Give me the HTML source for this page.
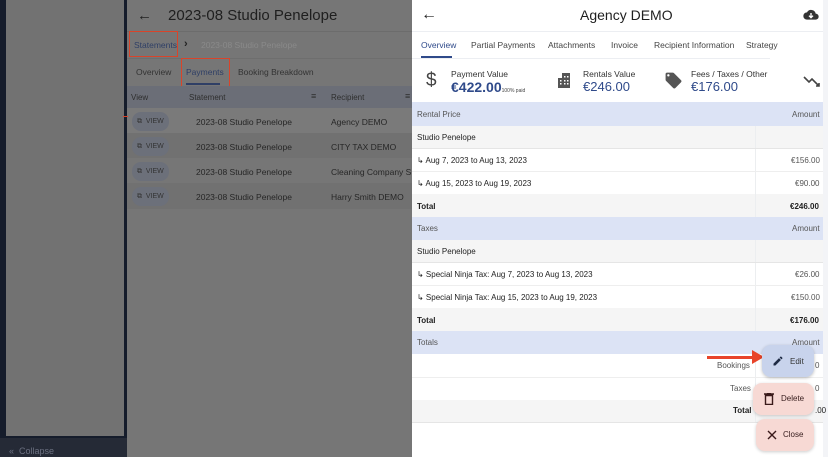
<!DOCTYPE html>
<html><head><style>
*{box-sizing:border-box;margin:0;padding:0}
body{width:828px;height:457px;overflow:hidden;font-family:"Liberation Sans",sans-serif;background:#fff;position:relative}
.abs{position:absolute}
.t{position:absolute;white-space:nowrap}
</style></head><body>
<!-- sidebar -->
<div class="abs" style="left:0;top:0;width:127px;height:457px;background:#151c2b"></div>
<div class="abs" style="left:6px;top:0;width:118px;height:436px;background:#727272"></div>
<div class="abs" style="left:0;top:438px;width:127px;height:19px;background:#252a36"></div>
<div class="t" style="left:9px;top:446px;font-size:9px;color:#6b7080">«&nbsp; Collapse</div>
<!-- middle dimmed panel -->
<div class="abs" style="left:127px;top:0;width:285px;height:457px;background:#767676"></div>
<div class="abs" style="left:127px;top:31px;width:285px;height:1px;background:#6c6c6c"></div>
<div class="abs" style="left:127px;top:58px;width:285px;height:1px;background:#6e6e6e"></div>
<div class="t" style="left:137px;top:7px;font-size:15px;color:#222">←</div>
<div class="t" style="left:168px;top:7px;font-size:15px;color:#1f1f1f">2023-08 Studio Penelope</div>
<div class="abs" style="left:129px;top:31px;width:49px;height:26px;border:1px solid #d9442a"></div>
<div class="t" style="left:134px;top:40px;font-size:8.5px;color:#2f3f66">Statements</div>
<div class="t" style="left:184px;top:38px;font-size:11px;color:#222;font-weight:bold">›</div>
<div class="t" style="left:201px;top:40px;font-size:8.5px;color:#8a8a8a">2023-08 Studio Penelope</div>
<div class="abs" style="left:181px;top:58px;width:49px;height:29px;border:1px solid #d9442a"></div>
<div class="t" style="left:136px;top:67px;font-size:8.5px;color:#333">Overview</div>
<div class="t" style="left:186px;top:67px;font-size:8.5px;color:#2f3f66">Payments</div>
<div class="abs" style="left:186px;top:83px;width:34px;height:2px;background:#2f3f66"></div>
<div class="t" style="left:238px;top:67px;font-size:8.5px;color:#333">Booking Breakdown</div>
<div class="abs" style="left:127px;top:86px;width:285px;height:22px;background:#6b6e77"></div>
<div class="t" style="left:131px;top:93px;font-size:8px;color:#2e2e2e">View</div>
<div class="t" style="left:189px;top:93px;font-size:8px;color:#2e2e2e">Statement</div>
<div class="t" style="left:311px;top:91px;font-size:9px;color:#2e2e2e">≡</div>
<div class="t" style="left:331px;top:93px;font-size:8px;color:#2e2e2e">Recipient</div>
<div class="t" style="left:405px;top:91px;font-size:9px;color:#2e2e2e">≡</div>
<div class="abs" style="left:127px;top:108px;width:285px;height:25px;background:#7a7a7a"></div>
<div class="abs" style="left:127px;top:133px;width:285px;height:25px;background:#717171"></div>
<div class="abs" style="left:127px;top:158px;width:285px;height:25px;background:#767676"></div>
<div class="abs" style="left:127px;top:183px;width:285px;height:26px;background:#717171"></div>
<div class="abs" style="left:123px;top:116px;width:5px;height:1px;background:#d9442a"></div>
<div class="abs" style="left:132px;top:112px;width:37px;height:19px;border-radius:9px;background:#6c707a"></div>
<div class="abs" style="left:132px;top:137px;width:37px;height:19px;border-radius:9px;background:#6c707a"></div>
<div class="abs" style="left:132px;top:162px;width:37px;height:19px;border-radius:9px;background:#6c707a"></div>
<div class="abs" style="left:132px;top:187px;width:37px;height:19px;border-radius:9px;background:#6c707a"></div>
<div class="t" style="left:137px;top:118px;font-size:7px;color:#333">⧉&nbsp; VIEW</div>
<div class="t" style="left:137px;top:143px;font-size:7px;color:#333">⧉&nbsp; VIEW</div>
<div class="t" style="left:137px;top:168px;font-size:7px;color:#333">⧉&nbsp; VIEW</div>
<div class="t" style="left:137px;top:193px;font-size:7px;color:#333">⧉&nbsp; VIEW</div>
<div class="t" style="left:196px;top:117px;font-size:8.5px;color:#262626">2023-08 Studio Penelope</div>
<div class="t" style="left:196px;top:142px;font-size:8.5px;color:#262626">2023-08 Studio Penelope</div>
<div class="t" style="left:196px;top:167px;font-size:8.5px;color:#262626">2023-08 Studio Penelope</div>
<div class="t" style="left:196px;top:192px;font-size:8.5px;color:#262626">2023-08 Studio Penelope</div>
<div class="t" style="left:331px;top:117px;font-size:8.5px;color:#262626">Agency DEMO</div>
<div class="t" style="left:331px;top:142px;font-size:8.5px;color:#262626">CITY TAX DEMO</div>
<div class="t" style="left:331px;top:167px;font-size:8.5px;color:#262626">Cleaning Company S.L</div>
<div class="t" style="left:331px;top:192px;font-size:8.5px;color:#262626">Harry Smith DEMO</div>
<!-- right panel -->
<div class="abs" style="left:412px;top:0;width:416px;height:457px;background:#fff"></div>
<div class="abs" style="left:823px;top:0;width:5px;height:457px;background:#f3f4f7"></div>
<div class="t" style="left:421px;top:6px;font-size:16px;color:#222">←</div>
<div class="t" style="left:580px;top:7px;font-size:14px;color:#1f1f1f">Agency DEMO</div>
<svg class="abs" style="left:803px;top:9px" width="16" height="12" viewBox="0 0 24 18"><path d="M19 7a7 7 0 0 0-13-2A5.5 5.5 0 0 0 6 16h13a4.5 4.5 0 0 0 0-9z" fill="#333"/><path d="M12 6v7M9 10l3 3 3-3" stroke="#fff" stroke-width="2" fill="none"/></svg>
<div class="abs" style="left:412px;top:31px;width:411px;height:1px;background:#eceef2"></div>
<div class="t" style="left:421px;top:40px;font-size:8.5px;color:#2f4a8a">Overview</div>
<div class="abs" style="left:421px;top:56px;width:31px;height:2px;background:#2f4a8a"></div>
<div class="t" style="left:471px;top:40px;font-size:8.5px;color:#444">Partial Payments</div>
<div class="t" style="left:548px;top:40px;font-size:8.5px;color:#444">Attachments</div>
<div class="t" style="left:611px;top:40px;font-size:8.5px;color:#444">Invoice</div>
<div class="t" style="left:654px;top:40px;font-size:8.5px;color:#444">Recipient Information</div>
<div class="t" style="left:746px;top:40px;font-size:8.5px;color:#444">Strategy</div>
<div class="abs" style="left:412px;top:58px;width:358px;height:1px;background:#eceef2"></div>
<div class="t" style="left:426px;top:70px;font-size:19px;color:#444">$</div>
<div class="t" style="left:451px;top:69px;font-size:8.5px;color:#333">Payment Value</div>
<div class="t" style="left:451px;top:79px;font-size:14px;color:#2f4a8a;font-weight:bold">€422.00<span style="font-size:5px;color:#444;font-weight:normal">100% paid</span></div>
<svg class="abs" style="left:557px;top:72px" width="16" height="16" viewBox="0 0 16 16"><path d="M1 16V6h4V1h8v15z" fill="#555"/><g fill="#fff"><rect x="3" y="8" width="1.5" height="1.5"/><rect x="3" y="11" width="1.5" height="1.5"/><rect x="7" y="4" width="1.5" height="1.5"/><rect x="10" y="4" width="1.5" height="1.5"/><rect x="7" y="8" width="1.5" height="1.5"/><rect x="10" y="8" width="1.5" height="1.5"/><rect x="7" y="11" width="1.5" height="1.5"/><rect x="10" y="11" width="1.5" height="1.5"/></g></svg>
<div class="t" style="left:583px;top:69px;font-size:8.5px;color:#333">Rentals Value</div>
<div class="t" style="left:583px;top:79px;font-size:13px;color:#2f4a8a">€246.00</div>
<svg class="abs" style="left:664px;top:71px" width="19" height="19" viewBox="0 0 24 24"><path d="M21.4 11.6l-9-9A2 2 0 0 0 11 2H4a2 2 0 0 0-2 2v7c0 .6.2 1.1.6 1.4l9 9a2 2 0 0 0 2.8 0l7-7a2 2 0 0 0 0-2.8zM5.5 7A1.5 1.5 0 1 1 7 5.5 1.5 1.5 0 0 1 5.5 7z" fill="#555"/></svg>
<div class="t" style="left:691px;top:69px;font-size:8.5px;color:#333">Fees / Taxes / Other</div>
<div class="t" style="left:691px;top:79px;font-size:13px;color:#2f4a8a">€176.00</div>
<svg class="abs" style="left:803px;top:75px" width="18" height="12" viewBox="0 0 18 12"><path d="M1 2l5 5 3-3 7 7M13 11h3V8" stroke="#444" stroke-width="1.6" fill="none"/></svg>
<!-- table -->
<div class="abs" style="left:755px;top:126px;width:1px;height:296px;background:#eceef0"></div>
<div class="abs" style="left:412px;top:102px;width:411px;height:24px;background:#dce3f5"></div>
<div class="t" style="left:417px;top:110px;font-size:8px;color:#555">Rental Price</div>
<div class="t" style="left:792px;top:110px;font-size:8px;color:#555">Amount</div>
<div class="abs" style="left:412px;top:126px;width:343px;height:22px;background:#f5f5f5"></div>
<div class="abs" style="left:756px;top:126px;width:67px;height:22px;background:#f5f5f5"></div>
<div class="t" style="left:417px;top:133px;font-size:8px;color:#222">Studio Penelope</div>
<div class="abs" style="left:412px;top:148px;width:411px;height:1px;background:#e5e5e5"></div>
<div class="t" style="left:417px;top:156px;font-size:8px;color:#222">↳ Aug 7, 2023 to Aug 13, 2023</div>
<div class="t" style="left:791px;top:156px;font-size:8px;color:#555">€156.00</div>
<div class="abs" style="left:412px;top:171px;width:411px;height:1px;background:#eee"></div>
<div class="t" style="left:417px;top:179px;font-size:8px;color:#222">↳ Aug 15, 2023 to Aug 19, 2023</div>
<div class="t" style="left:795px;top:179px;font-size:8px;color:#555">€90.00</div>
<div class="abs" style="left:412px;top:194px;width:343px;height:23px;background:#f5f5f5"></div>
<div class="abs" style="left:756px;top:194px;width:67px;height:23px;background:#f5f5f5"></div>
<div class="t" style="left:417px;top:202px;font-size:8px;color:#222;font-weight:bold">Total</div>
<div class="t" style="left:790px;top:202px;font-size:8px;color:#222;font-weight:bold">€246.00</div>
<div class="abs" style="left:412px;top:217px;width:411px;height:23px;background:#dce3f5"></div>
<div class="t" style="left:417px;top:224px;font-size:8px;color:#555">Taxes</div>
<div class="t" style="left:792px;top:224px;font-size:8px;color:#555">Amount</div>
<div class="abs" style="left:412px;top:240px;width:343px;height:22px;background:#f5f5f5"></div>
<div class="abs" style="left:756px;top:240px;width:67px;height:22px;background:#f5f5f5"></div>
<div class="t" style="left:417px;top:247px;font-size:8px;color:#222">Studio Penelope</div>
<div class="abs" style="left:412px;top:262px;width:411px;height:1px;background:#e5e5e5"></div>
<div class="t" style="left:417px;top:270px;font-size:8px;color:#222">↳ Special Ninja Tax: Aug 7, 2023 to Aug 13, 2023</div>
<div class="t" style="left:795px;top:270px;font-size:8px;color:#555">€26.00</div>
<div class="abs" style="left:412px;top:285px;width:411px;height:1px;background:#eee"></div>
<div class="t" style="left:417px;top:293px;font-size:8px;color:#222">↳ Special Ninja Tax: Aug 15, 2023 to Aug 19, 2023</div>
<div class="t" style="left:791px;top:293px;font-size:8px;color:#555">€150.00</div>
<div class="abs" style="left:412px;top:308px;width:343px;height:23px;background:#f5f5f5"></div>
<div class="abs" style="left:756px;top:308px;width:67px;height:23px;background:#f5f5f5"></div>
<div class="t" style="left:417px;top:316px;font-size:8px;color:#222;font-weight:bold">Total</div>
<div class="t" style="left:790px;top:316px;font-size:8px;color:#222;font-weight:bold">€176.00</div>
<div class="abs" style="left:412px;top:331px;width:411px;height:23px;background:#dce3f5"></div>
<div class="t" style="left:417px;top:338px;font-size:8px;color:#555">Totals</div>
<div class="t" style="left:792px;top:338px;font-size:8px;color:#555">Amount</div>
<div class="t" style="left:717px;top:361px;font-size:8px;color:#555">Bookings</div>
<div class="abs" style="left:412px;top:377px;width:411px;height:1px;background:#eee"></div>
<div class="t" style="left:730px;top:384px;font-size:8px;color:#555">Taxes</div>
<div class="abs" style="left:412px;top:400px;width:343px;height:22px;background:#f5f5f5"></div>
<div class="abs" style="left:756px;top:400px;width:67px;height:22px;background:#f5f5f5"></div>
<div class="t" style="left:733px;top:406px;font-size:8px;color:#222;font-weight:bold">Total</div>
<div class="abs" style="left:412px;top:422px;width:411px;height:1px;background:#e5e5e5"></div>
<div class="t" style="left:815px;top:361px;font-size:8px;color:#555">0</div>
<div class="t" style="left:815px;top:384px;font-size:8px;color:#555">0</div>
<div class="t" style="left:815px;top:406px;font-size:8px;color:#222">.00</div>
<!-- FABs -->
<div class="abs" style="left:707px;top:356px;width:50px;height:3px;background:#e8442a"></div>
<svg class="abs" style="left:752px;top:350px" width="12" height="14" viewBox="0 0 12 14"><path d="M0 0l12 7-12 7z" fill="#e8442a"/></svg>
<div class="abs" style="left:762px;top:345px;width:52px;height:32px;border-radius:9px;background:#c8d3ec;box-shadow:0 1px 3px rgba(0,0,0,.25)"></div>
<svg class="abs" style="left:772px;top:355px" width="12" height="12" viewBox="0 0 24 24"><path d="M3 17.2V21h3.8L17.8 9.9l-3.8-3.7zM20.7 7a1 1 0 0 0 0-1.4l-2.3-2.3a1 1 0 0 0-1.4 0l-1.8 1.8 3.7 3.7z" fill="#1e2a44"/></svg>
<div class="t" style="left:790px;top:357px;font-size:8px;color:#333">Edit</div>
<div class="abs" style="left:753px;top:383px;width:61px;height:32px;border-radius:9px;background:#f7d9d4;box-shadow:0 1px 3px rgba(0,0,0,.2)"></div>
<svg class="abs" style="left:764px;top:393px" width="10" height="12" viewBox="0 0 10 12"><path d="M0 1h10M3 0h4M1.5 2.5h7V11.5h-7z" stroke="#3a1a1a" stroke-width="1.4" fill="none"/></svg>
<div class="t" style="left:781px;top:394px;font-size:8px;color:#3a2020">Delete</div>
<div class="abs" style="left:756px;top:419px;width:58px;height:32px;border-radius:9px;background:#f7d9d4;box-shadow:0 1px 3px rgba(0,0,0,.2)"></div>
<svg class="abs" style="left:767px;top:430px" width="10" height="10" viewBox="0 0 10 10"><path d="M1 1l8 8M9 1l-8 8" stroke="#3a1a1a" stroke-width="1.4"/></svg>
<div class="t" style="left:783px;top:430px;font-size:8px;color:#3a2020">Close</div>
</body></html>
